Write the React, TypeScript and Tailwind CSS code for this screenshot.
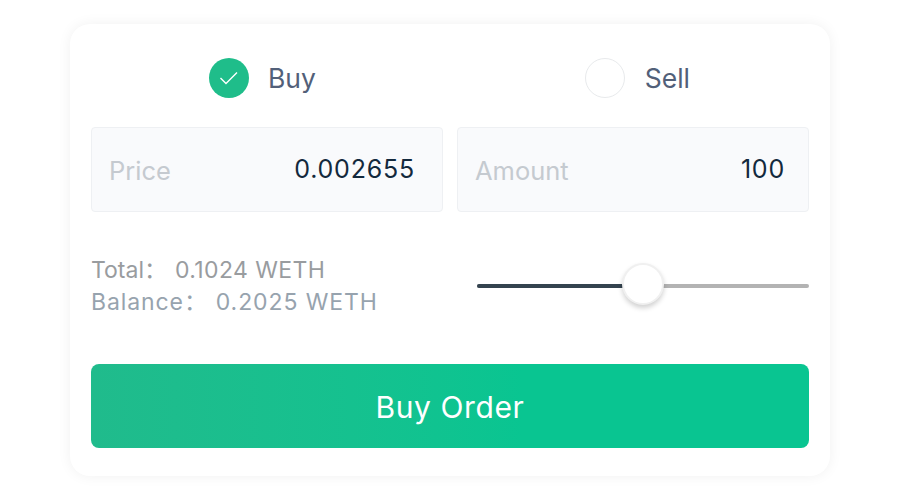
export default function App() {
  return (
    <div className="w-[900px] h-[500px] bg-white pt-6 px-[70px] font-['Inter','Noto_Sans_CJK_SC',sans-serif]">
      <div className="w-[760px] h-[452px] bg-white rounded-[20px] shadow-[0_0_14px_rgba(0,0,0,0.06)] pt-[34px] px-[21px]">
        <div className="flex justify-between pl-[118px] pr-[119px] h-10">
          <div className="flex items-center gap-[19px]">
            <div className="w-10 h-10 rounded-full bg-[#1fbd8a] flex items-center justify-center">
              <svg width="20" height="16" viewBox="0 0 20 16" fill="none">
                <path d="M1.5 8 L7 13.5 L18 2.5" stroke="white" strokeWidth="1.4" />
              </svg>
            </div>
            <span className="text-[26.5px] leading-none text-[#526079]">Buy</span>
          </div>
          <div className="flex items-center gap-5">
            <div className="w-10 h-10 rounded-full bg-white border border-[#e8eaec]" />
            <span className="text-[26.5px] leading-none text-[#526079]">Sell</span>
          </div>
        </div>
        <div className="grid grid-cols-2 gap-[14px] mt-[29px]">
          <div className="h-[85px] bg-[#f9fafc] border border-[#eef0f3] rounded flex items-center justify-between pl-[17px] pr-[27px]">
            <span className="text-[25.5px] text-[#c5cad0] mt-[3px]">Price</span>
            <span className="text-[25px] text-[#13293d] tracking-[0.8px] mt-[1px]">0.002655</span>
          </div>
          <div className="h-[85px] bg-[#f9fafc] border border-[#eef0f3] rounded flex items-center justify-between pl-[17px] pr-[23px]">
            <span className="text-[25.5px] text-[#c5cad0] mt-[3px]">Amount</span>
            <span className="text-[25px] text-[#13293d] tracking-[0.8px] mt-[1px]">100</span>
          </div>
        </div>
        <div className="flex justify-between mt-[42px] h-[64px]">
          <div className="text-[23px] leading-8">
            <div className="flex text-[#999c9f]">
              <span>Total</span><span>：</span><span className="ml-[8px] tracking-[0.4px]">0.1024 WETH</span>
            </div>
            <div className="flex text-[#97a3ae] tracking-[0.9px]">
              <span>Balance</span><span>：</span><span className="ml-2">0.2025 WETH</span>
            </div>
          </div>
          <div className="relative w-[332px] h-[4px] mt-[30px] rounded-full bg-[#b3b3b3]">
            <div className="h-full w-[150px] rounded-l-full bg-[#34434f]" />
            <div className="absolute left-[145px] top-[-21px] w-[42px] h-[42px] rounded-full bg-white border-2 border-[#f0f0f0] shadow-[0_3px_5px_rgba(0,0,0,0.18)]" />
          </div>
        </div>
        <button className="mt-[46px] w-full h-[84px] rounded-lg bg-linear-to-r from-[#20bb8c] to-[#09c591] to-60% text-white text-[30px] tracking-[0.6px] pt-[2px] flex items-center justify-center">
          Buy Order
        </button>
      </div>
    </div>
  );
}
